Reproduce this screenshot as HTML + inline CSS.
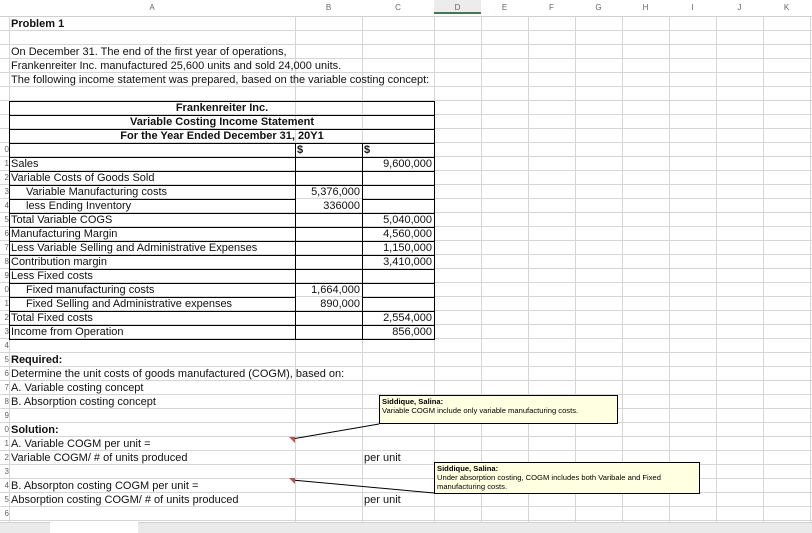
<!DOCTYPE html>
<html><head><style>
*{margin:0;padding:0;box-sizing:border-box}
body{width:812px;height:533px;overflow:hidden;background:#fff;position:relative;font-family:"Liberation Sans",Arial,sans-serif;font-size:11px;color:#111}
.grid{position:absolute;left:0;top:17px;width:812px;height:506px;
background-image:repeating-linear-gradient(to bottom,transparent 0 13px,#d6d6d6 13px 14px);}
.v{position:absolute;top:0;width:1px;height:523px;background:#d6d6d6}
.hdr{position:absolute;top:0;left:0;width:812px;height:17px;background:#fff;border-bottom:1px solid #cfcfcf}
.hl{position:absolute;top:3px;font-size:8px;color:#666;text-align:center}
.t{position:absolute;height:14px;line-height:14px;white-space:nowrap}
.b{font-weight:bold}
.r{text-align:right}
.rn{position:absolute;left:0;width:9px;height:14px;line-height:14px;font-size:8px;color:#666;text-align:right;overflow:hidden}
.bx{position:absolute;border:1px solid #000}
.hline{position:absolute;height:1px;background:#000}
.vline{position:absolute;width:1px;background:#000}
.cm{position:absolute;background:#ffffe1;border:1px solid #000;font-size:7.6px;line-height:9px;padding:1px 2px;color:#000}
</style></head><body>
<div class="grid"></div>
<div class="v" style="left:9px"></div>
<div class="v" style="left:295px"></div>
<div class="v" style="left:362px"></div>
<div class="v" style="left:434px"></div>
<div class="v" style="left:481px"></div>
<div class="v" style="left:528px"></div>
<div class="v" style="left:575px"></div>
<div class="v" style="left:622px"></div>
<div class="v" style="left:669px"></div>
<div class="v" style="left:716px"></div>
<div class="v" style="left:763px"></div>
<div class="v" style="left:810px"></div>
<div class="hdr">
<div class="hl" style="left:9px;width:286px">A</div>
<div class="hl" style="left:295px;width:67px">B</div>
<div class="hl" style="left:362px;width:72px">C</div>
<div class="hl" style="left:434px;width:47px;background:#ececec;height:14px;top:0;padding-top:3px;border-bottom:2px solid #3f7a52">D</div>
<div class="hl" style="left:481px;width:47px">E</div>
<div class="hl" style="left:528px;width:47px">F</div>
<div class="hl" style="left:575px;width:47px">G</div>
<div class="hl" style="left:622px;width:47px">H</div>
<div class="hl" style="left:669px;width:47px">I</div>
<div class="hl" style="left:716px;width:47px">J</div>
<div class="hl" style="left:763px;width:47px">K</div>
</div>

<div class="bx" style="left:9px;top:101px;width:426px;height:239px"></div>
<div class="hline" style="left:9px;top:115px;width:426px"></div>
<div class="hline" style="left:9px;top:129px;width:426px"></div>
<div class="hline" style="left:9px;top:143px;width:426px"></div>
<div class="vline" style="left:295px;top:143px;height:197px"></div>
<div class="vline" style="left:362px;top:143px;height:197px"></div>
<div class="hline" style="left:9px;top:157px;width:426px"></div>
<div class="hline" style="left:9px;top:171px;width:426px"></div>
<div class="hline" style="left:9px;top:185px;width:426px"></div>
<div class="hline" style="left:9px;top:199px;width:287px"></div>
<div class="hline" style="left:362px;top:199px;width:73px"></div>
<div class="hline" style="left:9px;top:213px;width:426px"></div>
<div class="hline" style="left:9px;top:227px;width:426px"></div>
<div class="hline" style="left:9px;top:241px;width:426px"></div>
<div class="hline" style="left:9px;top:255px;width:426px"></div>
<div class="hline" style="left:9px;top:269px;width:426px"></div>
<div class="hline" style="left:9px;top:283px;width:426px"></div>
<div class="hline" style="left:9px;top:297px;width:287px"></div>
<div class="hline" style="left:362px;top:297px;width:73px"></div>
<div class="hline" style="left:9px;top:311px;width:426px"></div>
<div class="hline" style="left:9px;top:325px;width:426px"></div>

<div class="rn" style="top:143px">0</div><div class="rn" style="top:157px">1</div><div class="rn" style="top:171px">2</div><div class="rn" style="top:185px">3</div><div class="rn" style="top:199px">4</div><div class="rn" style="top:213px">5</div><div class="rn" style="top:227px">6</div><div class="rn" style="top:241px">7</div><div class="rn" style="top:255px">8</div><div class="rn" style="top:269px">9</div><div class="rn" style="top:283px">0</div><div class="rn" style="top:297px">1</div><div class="rn" style="top:311px">2</div><div class="rn" style="top:325px">3</div><div class="rn" style="top:339px">4</div><div class="rn" style="top:353px">5</div><div class="rn" style="top:367px">6</div><div class="rn" style="top:381px">7</div><div class="rn" style="top:395px">8</div><div class="rn" style="top:409px">9</div><div class="rn" style="top:423px">0</div><div class="rn" style="top:437px">1</div><div class="rn" style="top:451px">2</div><div class="rn" style="top:465px">3</div><div class="rn" style="top:479px">4</div><div class="rn" style="top:493px">5</div><div class="rn" style="top:507px">6</div>

<div class="t b" style="left:11px;top:17px">Problem 1</div>
<div class="t" style="left:11px;top:45px">On December 31. The end of the first year of operations,</div>
<div class="t" style="left:11px;top:59px">Frankenreiter Inc. manufactured 25,600 units and sold 24,000 units.</div>
<div class="t" style="left:11px;top:73px">The following income statement was prepared, based on the variable costing concept:</div>

<div class="t b" style="left:9px;width:426px;top:101px;text-align:center">Frankenreiter Inc.</div>
<div class="t b" style="left:9px;width:426px;top:115px;text-align:center">Variable Costing Income Statement</div>
<div class="t b" style="left:9px;width:426px;top:129px;text-align:center">For the Year Ended December 31, 20Y1</div>
<div class="t b" style="left:297px;top:143px">$</div>
<div class="t b" style="left:364px;top:143px">$</div>

<div class="t" style="left:11px;top:157px">Sales</div>
<div class="t" style="left:11px;top:171px">Variable Costs of Goods Sold</div>
<div class="t" style="left:26px;top:185px">Variable Manufacturing costs</div>
<div class="t" style="left:26px;top:199px">less Ending Inventory</div>
<div class="t" style="left:11px;top:213px">Total Variable COGS</div>
<div class="t" style="left:11px;top:227px">Manufacturing Margin</div>
<div class="t" style="left:11px;top:241px">Less Variable Selling and Administrative Expenses</div>
<div class="t" style="left:11px;top:255px">Contribution margin</div>
<div class="t" style="left:11px;top:269px">Less Fixed costs</div>
<div class="t" style="left:26px;top:283px">Fixed manufacturing costs</div>
<div class="t" style="left:26px;top:297px">Fixed Selling and Administrative expenses</div>
<div class="t" style="left:11px;top:311px">Total Fixed costs</div>
<div class="t" style="left:11px;top:325px">Income from Operation</div>

<div class="t r" style="left:296px;width:64px;top:185px">5,376,000</div>
<div class="t r" style="left:296px;width:64px;top:199px">336000</div>
<div class="t r" style="left:296px;width:64px;top:283px">1,664,000</div>
<div class="t r" style="left:296px;width:64px;top:297px">890,000</div>

<div class="t r" style="left:363px;width:69px;top:157px">9,600,000</div>
<div class="t r" style="left:363px;width:69px;top:213px">5,040,000</div>
<div class="t r" style="left:363px;width:69px;top:227px">4,560,000</div>
<div class="t r" style="left:363px;width:69px;top:241px">1,150,000</div>
<div class="t r" style="left:363px;width:69px;top:255px">3,410,000</div>
<div class="t r" style="left:363px;width:69px;top:311px">2,554,000</div>
<div class="t r" style="left:363px;width:69px;top:325px">856,000</div>

<div class="t b" style="left:11px;top:353px">Required:</div>
<div class="t" style="left:11px;top:367px">Determine the unit costs of goods manufactured (COGM), based on:</div>
<div class="t" style="left:11px;top:381px">A. Variable costing concept</div>
<div class="t" style="left:11px;top:395px">B. Absorption costing concept</div>
<div class="t b" style="left:11px;top:423px">Solution:</div>
<div class="t" style="left:11px;top:437px">A. Variable COGM per unit =</div>
<div class="t" style="left:11px;top:451px">Variable COGM/ # of units produced</div>
<div class="t" style="left:364px;top:451px">per unit</div>
<div class="t" style="left:11px;top:479px">B. Absorpton costing COGM per unit =</div>
<div class="t" style="left:11px;top:493px">Absorption costing COGM/ # of units produced</div>
<div class="t" style="left:364px;top:493px">per unit</div>

<svg style="position:absolute;left:0;top:0" width="812" height="533">
<line x1="292" y1="439" x2="379" y2="424" stroke="#000" stroke-width="1"/>
<line x1="292" y1="480" x2="434" y2="493" stroke="#000" stroke-width="1"/>
<polygon points="289,437 295,437 295,443" fill="#c0504d"/>
<polygon points="289,478 295,478 295,484" fill="#c0504d"/>
</svg>
<div class="cm" style="left:379px;top:395px;width:239px;height:29px"><b>Siddique, Salina:</b><br>Variable COGM include only variable manufacturing costs.</div>
<div class="cm" style="left:434px;top:462px;width:266px;height:32px"><b>Siddique, Salina:</b><br>Under absorption costing, COGM includes both Varibale and Fixed manufacturing costs.</div>

<div style="position:absolute;left:0;top:522px;width:812px;height:11px;background:#eaeaea;border-top:1px solid #d0d0d0"></div>
<div style="position:absolute;left:50px;top:522px;width:88px;height:11px;background:#fff"></div>
</body></html>
